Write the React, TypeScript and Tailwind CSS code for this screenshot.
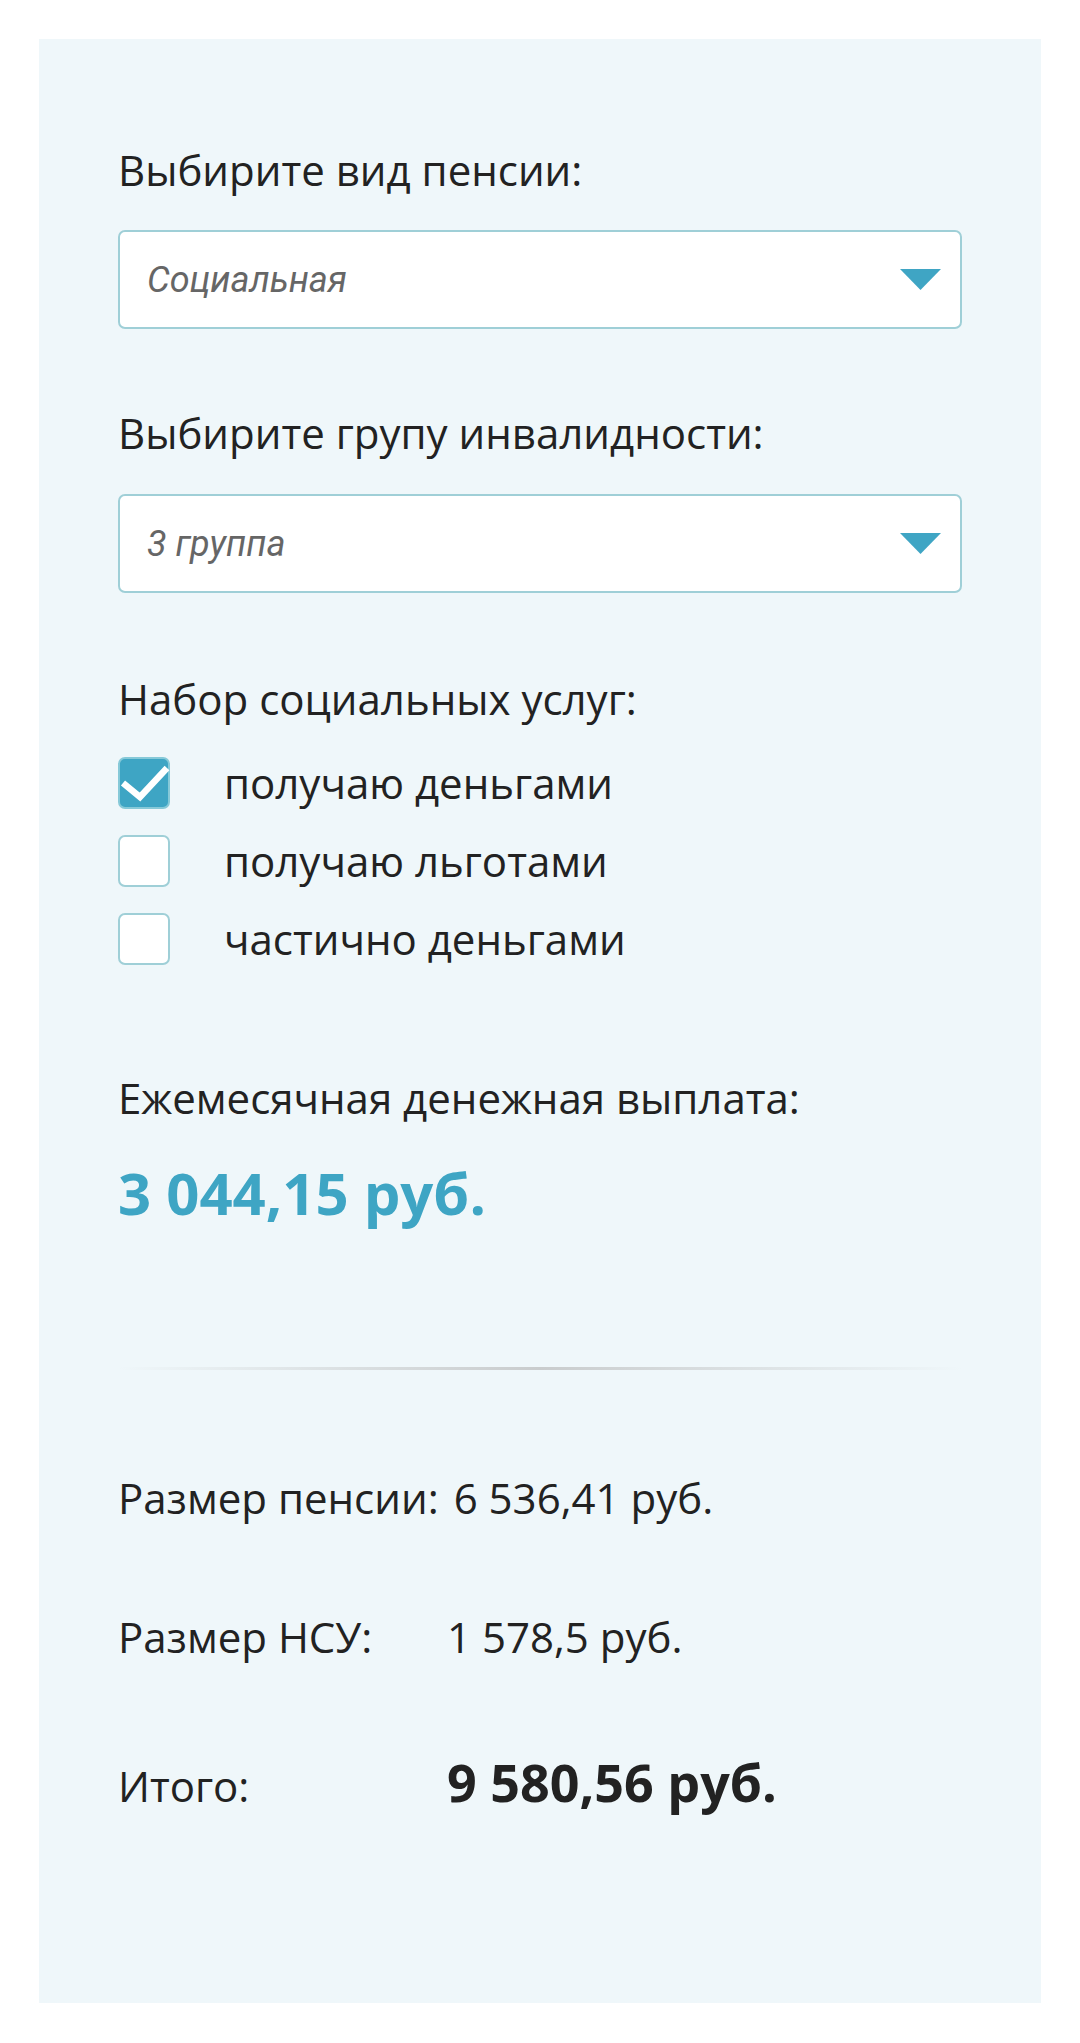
import React from "react";

const sans = { fontFamily: '"Open Sans", "Noto Sans", sans-serif' };

function Select({ value }: { value: string }) {
  return (
    <div className="flex h-[99px] w-full items-center justify-between rounded-[7px] border-2 border-[#9fcfd7] bg-white pl-[27px] pr-[19px]">
      <span
        className="text-[36px] italic leading-none text-[#666666]"
        style={{ fontFamily: 'Roboto, "Liberation Sans", sans-serif' }}
      >
        {value}
      </span>
      <svg width="41" height="21" viewBox="0 0 41 21">
        <polygon points="0,0 41,0 20.5,21" fill="#3fa5c4" />
      </svg>
    </div>
  );
}

function Check({ checked, label }: { checked?: boolean; label: string }) {
  return (
    <div className="flex h-[52px] items-center">
      {checked ? (
        <div className="flex h-[52px] w-[52px] shrink-0 items-center justify-center rounded-[7px] border-2 border-[#86c9d8] bg-[#3ea5c4]">
          <svg width="52" height="52" viewBox="0 0 52 52" className="-m-[2px]">
            <polyline
              points="5,26 22,40 49,11"
              fill="none"
              stroke="#ffffff"
              strokeWidth="6.5"
            />
          </svg>
        </div>
      ) : (
        <div className="h-[52px] w-[52px] shrink-0 rounded-[7px] border-2 border-[#9fcfd7] bg-white" />
      )}
      <span className="ml-[54px] text-[42px] leading-[52px] text-[#222222]">{label}</span>
    </div>
  );
}

export default function App() {
  return (
    <div className="min-h-[2043px] bg-white pt-[39px]" style={sans}>
      <div className="mx-[39px] bg-[#eff7fa] px-[79px] pb-[191px] pt-[105px]">
        <div className="text-[42px] leading-[52px] text-[#222222]">Выбирите вид пенсии:</div>
        <div className="mt-[34px]">
          <Select value="Социальная" />
        </div>

        <div className="mt-[78px] text-[42px] leading-[52px] text-[#222222]">
          Выбирите групу инвалидности:
        </div>
        <div className="mt-[35px]">
          <Select value="3 группа" />
        </div>

        <div className="mt-[80px] text-[42px] leading-[52px] text-[#222222]">
          Набор социальных услуг:
        </div>
        <div className="mt-[32px] flex flex-col gap-[26px]">
          <Check checked label="получаю деньгами" />
          <Check label="получаю льготами" />
          <Check label="частично деньгами" />
        </div>

        <div className="mt-[107px] text-[42px] leading-[52px] text-[#222222]">
          Ежемесячная денежная выплата:
        </div>
        <div className="mt-[33px] text-[58px] font-bold leading-[72px] text-[#3ea5c4]">
          3 044,15 руб.
        </div>

        <div className="mt-[138px] h-[3px] w-full bg-gradient-to-r from-transparent via-[#c9cccd] to-transparent" />

        <div className="mt-[102px] flex flex-col text-[42px] leading-[52px] text-[#222222]">
          <div className="flex items-baseline">
            <span className="shrink-0 whitespace-nowrap pr-[15px]">Размер пенсии:</span>
            <span>6 536,41 руб.</span>
          </div>
          <div className="mt-[87px] flex items-baseline">
            <span className="w-[329px] shrink-0">Размер НСУ:</span>
            <span>1 578,5 руб.</span>
          </div>
          <div className="mt-[93px] flex items-baseline">
            <span className="w-[329px] shrink-0">Итого:</span>
            <span className="text-[52px] font-bold">9 580,56 руб.</span>
          </div>
        </div>
      </div>
    </div>
  );
}
